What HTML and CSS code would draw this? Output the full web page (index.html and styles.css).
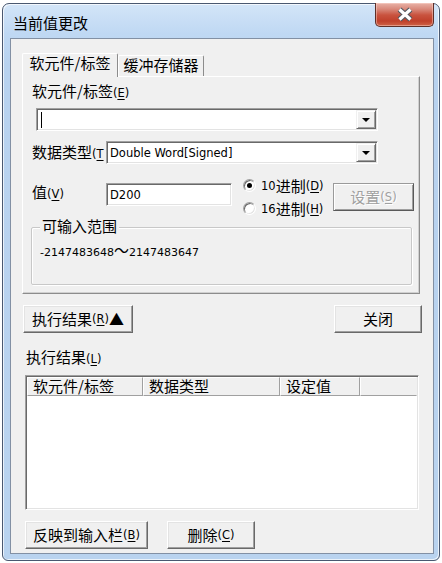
FILE: index.html
```html
<!DOCTYPE html>
<html lang="zh-CN">
<head>
<meta charset="utf-8">
<title>当前值更改</title>
<link rel="stylesheet" href="styles.css">
</head>
<body>
<div class="window">
  <div class="titlebar">
    <span class="title">当前值更改</span>
    <div class="close-btn">
      <svg width="18" height="15" viewBox="0 0 18 15">
        <path d="M3.5 2.5 L14.5 12.5 M14.5 2.5 L3.5 12.5" stroke="#505860" stroke-width="5.5" fill="none"/>
        <path d="M3.5 2.5 L14.5 12.5 M14.5 2.5 L3.5 12.5" stroke="#ffffff" stroke-width="3.2" fill="none"/>
      </svg>
    </div>
  </div>
  <div class="client">
    <div class="tabs">
      <div class="tab active">软元件/标签</div>
      <div class="tab">缓冲存储器</div>
    </div>
    <div class="panel">
      <div class="lbl first">软元件/标签<span class="acc">(<u>E</u>)</span></div>
      <div class="combo combo-dev">
        <span class="caret"></span>
        <div class="ddbtn"><i class="tri"></i></div>
      </div>
      <div class="row row-type">
        <span class="lbl fixed clipped">数据类型<span class="acc">(<u>T</u></span></span>
        <div class="combo combo-type">
          <span class="val">Double Word[Signed]</span>
          <div class="ddbtn"><i class="tri"></i></div>
        </div>
      </div>
      <div class="row row-val">
        <span class="lbl fixed val-lbl">值<span class="acc">(<u>V</u>)</span></span>
        <div class="field"><span class="val">D200</span></div>
        <div class="radios">
          <div class="radio"><span class="dot on"></span><span class="num">10</span>进制<span class="acc">(<u>D</u>)</span></div>
          <div class="radio"><span class="dot"></span><span class="num">16</span>进制<span class="acc">(<u>H</u>)</span></div>
        </div>
        <div class="btn btn-set disabled">设置<span class="acc">(<u>S</u>)</span></div>
      </div>
      <div class="group">
        <span class="legend">可输入范围</span>
        <div class="range"><span class="num">-2147483648</span>～<span class="num">2147483647</span></div>
      </div>
    </div>
    <div class="btnrow">
      <div class="btn btn-result">执行结果<span class="acc">(<u>R</u>)</span>▲</div>
      <div class="btn btn-close">关闭</div>
    </div>
    <div class="lbl result-lbl">执行结果<span class="acc">(<u>L</u>)</span></div>
    <div class="list">
      <div class="lhead">
        <div class="hcell c1">软元件/标签</div>
        <div class="hcell c2">数据类型</div>
        <div class="hcell c3">设定值</div>
        <div class="hcell c4"></div>
      </div>
    </div>
    <div class="btnrow2">
      <div class="btn btn-reflect">反映到输入栏<span class="acc">(<u>B</u>)</span></div>
      <div class="btn btn-del">删除<span class="acc">(<u>C</u>)</span></div>
    </div>
  </div>
</div>
</body>
</html>
```
FILE: styles.css
```css
* { box-sizing: border-box; }
html, body { margin: 0; padding: 0; background: #ffffff; }
body {
  width: 442px;
  height: 563px;
  overflow: hidden;
  padding: 3px 0 0 2px;
  font-family: "Noto Sans CJK SC", sans-serif;
  font-size: 15px;
  line-height: 16px;
  color: #000;
}
.window {
  width: 438px;
  height: 558px;
  border: 1px solid #4a5870;
  border-radius: 7px 7px 6px 6px;
  background: linear-gradient(180deg, #d3e5f8 0px, #bfd8f3 30px, #b8d2ef 60px, #b9d3ef 100%);
  padding: 0 5px 6px 7px;
  display: flex;
  flex-direction: column;
  box-shadow: inset 1px 1px 0 rgba(255,255,255,0.7), inset -1px -1px 0 rgba(255,255,255,0.7);
}
.titlebar {
  height: 34px;
  display: flex;
  justify-content: space-between;
  align-items: flex-start;
}
.title {
  margin: 10px 0 0 3px;
  font-size: 15px;
  line-height: 18px;
  color: #000;
}
.close-btn {
  width: 59px;
  height: 24px;
  margin-top: -1px;
  border: 1px solid #5e2f28;
  border-top: none;
  border-radius: 0 0 5px 5px;
  background: linear-gradient(180deg, #e8b3a8 0px, #d98a7c 6px, #c9533f 12px, #c0402b 18px, #d06a4c 24px);
  display: flex;
  align-items: center;
  justify-content: center;
  box-shadow: inset 0 0 0 1px rgba(255,220,210,0.45);
}
.client {
  flex: 1;
  border: 1px solid #8290a4;
  background: #f0f0f0;
  display: flex;
  flex-direction: column;
}
/* tabs */
.tabs {
  display: flex;
  align-items: flex-end;
  height: 23px;
  margin: 14px 0 0 11px;
}
.tab {
  height: 21px;
  border: 1px solid;
  border-color: #ffffff #8c8c8c transparent #ffffff;
  border-bottom: none;
  border-radius: 2px 2px 0 0;
  background: #f0f0f0;
  display: flex;
  align-items: center;
  justify-content: center;
  white-space: nowrap;
}
.tab.active {
  width: 96px;
  height: 24px;
  margin-bottom: -1px;
  position: relative;
  z-index: 1;
  padding-bottom: 5px;
}
.tab:not(.active) {
  width: 86px;
  padding-bottom: 2px;
}
.panel {
  height: 218px;
  margin: 0 13px 0 11px;
  border: 1px solid;
  border-color: #ffffff #8c8c8c #8c8c8c #ffffff;
  box-shadow: inset -1px -1px 0 #d0d0d0;
  display: flex;
  flex-direction: column;
}
.lbl { white-space: nowrap; line-height: 16px; }
.lbl.first { margin: 6px 0 0 9px; }
.acc {
  font-family: "DejaVu Sans", sans-serif;
  font-size: 11.5px;
}
.acc u { text-decoration: underline; text-underline-offset: 2px; }
.num {
  font-family: "DejaVu Sans", sans-serif;
  font-size: 11px;
}
.val {
  font-family: "DejaVu Sans", sans-serif;
  font-size: 11.5px;
  line-height: 16px;
  white-space: nowrap;
}
.combo, .field {
  height: 23px;
  background: #fff;
  border: 1px solid;
  border-color: #a0a0a0 #ffffff #ffffff #a0a0a0;
  box-shadow: inset 1px 1px 0 #696969, inset -1px -1px 0 #e3e3e3;
  display: flex;
  align-items: center;
  padding-left: 3px;
}
.combo-dev {
  width: 342px;
  margin: 7px 0 0 13px;
}
.caret {
  width: 1px;
  height: 16px;
  background: #000;
  margin-left: 1px;
}
.ddbtn {
  margin-left: auto;
  margin-right: 1px;
  width: 20px;
  height: 19px;
  background: #f0f0f0;
  border: 1px solid;
  border-color: #f0f0f0 #696969 #696969 #f0f0f0;
  box-shadow: inset 1px 1px 0 #ffffff, inset -1px -1px 0 #a0a0a0;
  display: flex;
  align-items: center;
  justify-content: center;
  flex: none;
}
.tri {
  width: 0;
  height: 0;
  border-left: 4px solid transparent;
  border-right: 4px solid transparent;
  border-top: 4px solid #000;
  margin-top: 1px;
}
.row { display: flex; }
.lbl.fixed {
  width: 74px;
  margin-left: 9px;
  flex: none;
}
.lbl.clipped { overflow-x: clip; }
.row-type {
  margin-top: 10px;
  align-items: center;
  height: 23px;
}
.combo-type { width: 272px; }
.row-val {
  margin-top: 14px;
  height: 38px;
  align-items: flex-start;
}
.val-lbl { margin-top: 6px; }
.field {
  width: 126px;
  margin-top: 5px;
}
.radios {
  width: 90px;
  margin-left: 11px;
  display: flex;
  flex-direction: column;
}
.radio {
  height: 23px;
  display: flex;
  align-items: flex-start;
  white-space: nowrap;
  line-height: 16px;
}
.radio .num { margin-left: 5px; font-size: 11.5px; }
.dot {
  width: 13px;
  height: 13px;
  border-radius: 50%;
  background: #fff;
  border: 1px solid;
  border-color: #a0a0a0 #ffffff #ffffff #a0a0a0;
  box-shadow: inset 1px 1px 0 #696969, inset -1px -1px 0 #e3e3e3;
  display: flex;
  align-items: center;
  justify-content: center;
  flex: none;
  margin-top: 1px;
}
.dot.on::after {
  content: "";
  width: 5px;
  height: 5px;
  border-radius: 50%;
  background: #000;
}
.btn {
  height: 28px;
  background: #f0f0f0;
  border: 1px solid;
  border-color: #ffffff #696969 #696969 #ffffff;
  box-shadow: inset -1px -1px 0 #a0a0a0, inset 1px 1px 0 #e3e3e3;
  display: flex;
  align-items: center;
  justify-content: center;
  white-space: nowrap;
}
.btn-set {
  width: 81px;
  margin-top: 5px;
}
.btn.disabled {
  color: #a0a0a0;
  text-shadow: 1px 1px 0 #ffffff;
  border-color: #9a9a9a #5a5a5a #5a5a5a #9a9a9a;
  box-shadow: inset 1px 1px 0 #ffffff, inset -1px -1px 0 #a0a0a0;
}
.group {
  position: relative;
  margin: 11px 7px 0 8px;
  height: 58px;
  border: 1px solid #c8c8c8;
  border-radius: 2px;
  box-shadow: 1px 1px 0 #ffffff, inset 1px 1px 0 #ffffff;
  padding: 14px 0 0 8px;
}
.legend {
  position: absolute;
  top: -10px;
  left: 8px;
  padding: 0 2px;
  line-height: 16px;
  background: #f0f0f0;
  white-space: nowrap;
}
.range {
  line-height: 16px;
  white-space: nowrap;
}
.btnrow {
  display: flex;
  justify-content: space-between;
  margin: 11px 11px 0 12px;
}
.btn-result { width: 110px; }
.btn-close { width: 88px; }
.result-lbl { margin: 16px 0 0 15px; }
.list {
  width: 394px;
  height: 135px;
  margin: 8px 0 0 14px;
  background: #fff;
  border: 1px solid;
  border-color: #a0a0a0 #ffffff #ffffff #a0a0a0;
  box-shadow: inset 1px 1px 0 #696969, inset -1px -1px 0 #e3e3e3;
  padding: 1px;
}
.lhead {
  display: flex;
  height: 19px;
  background: #f0f0f0;
}
.hcell {
  height: 19px;
  border: 1px solid;
  border-color: #ffffff #a0a0a0 #a0a0a0 #ffffff;
  padding-left: 5px;
  line-height: 16px;
  white-space: nowrap;
}
.c1 { width: 116px; }
.c2 { width: 137px; }
.c3 { width: 80px; }
.c4 { flex: 1; border-right-color: #f0f0f0; }
.btnrow2 {
  display: flex;
  gap: 19px;
  margin: 11px 0 0 14px;
}
.btn-reflect { width: 123px; }
.btn-del { width: 88px; }
```
